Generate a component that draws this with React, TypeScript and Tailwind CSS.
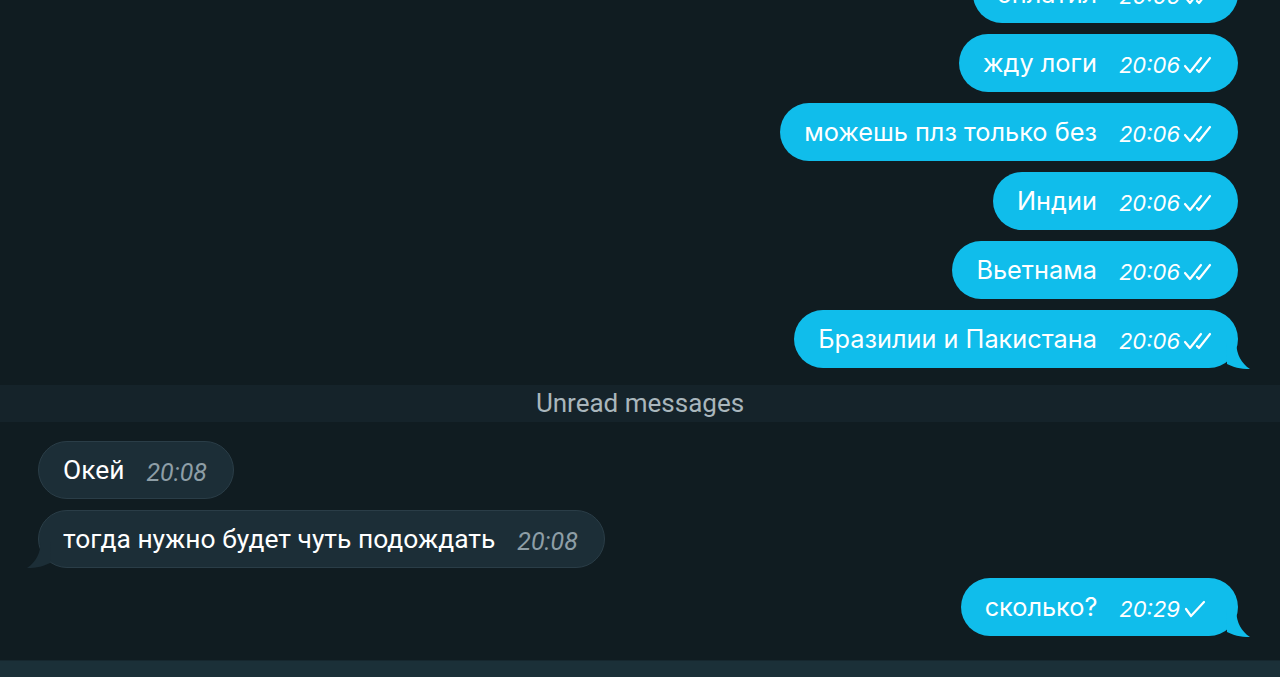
import React from "react";

type Msg = { text: string; time: string; read?: boolean; tail?: boolean };

const outgoingTop: Msg[] = [
  { text: "оплатил", time: "20:05", read: true },
  { text: "жду логи", time: "20:06", read: true },
  { text: "можешь плз только без", time: "20:06", read: true },
  { text: "Индии", time: "20:06", read: true },
  { text: "Вьетнама", time: "20:06", read: true },
  { text: "Бразилии и Пакистана", time: "20:06", read: true, tail: true },
];

const Checks = ({ double }: { double: boolean }) => (
  <svg width="32" height="22" viewBox="0 0 32 22" fill="none" stroke="white" strokeWidth="2.2" strokeLinecap="round" strokeLinejoin="round" className="ml-[2px]">
    {double ? (
      <>
        <path d="M3 12 L8 18 L19 4" />
        <path d="M15 16 L17 18 L28 4" />
      </>
    ) : (
      <path d="M4 11 L9 18 L22 4" />
    )}
  </svg>
);

const OutTail = () => (
  <svg width="24" height="26" viewBox="0 0 24 26" className="absolute right-[-12px] bottom-[-1px]">
    <path d="M0 0 L10 0 C 11 12, 15 20, 24 26 C 14 26, 7 24, 1 21 Z" fill="#10bdeb" />
  </svg>
);

const InTail = () => (
  <svg width="24" height="26" viewBox="0 0 24 26" className="absolute left-[-12px] bottom-[-1px]">
    <path d="M24 0 L14 0 C 13 12, 9 20, 0 26 C 10 26, 17 24, 23 21 Z" fill="#1c2e37" />
  </svg>
);

const Outgoing = ({ m }: { m: Msg }) => (
  <div className="flex shrink-0 justify-end pr-[42px]">
    <div className="relative h-[58px] shrink-0 rounded-[29px] bg-[#10bdeb] pl-[24px] pr-[24px] flex items-center text-white">
      {m.tail && <OutTail />}
      <span className="relative text-[25.3px] leading-none font-['Inter',sans-serif] whitespace-nowrap">{m.text}</span>
      <span className="relative ml-[22px] text-[22px] italic leading-none font-['Inter',sans-serif] mt-[3px]">{m.time}</span>
      <span className="relative mt-[3px]"><Checks double={!!m.read} /></span>
    </div>
  </div>
);

const Incoming = ({ m }: { m: Msg }) => (
  <div className="flex shrink-0 justify-start pl-[38px]">
    <div className="relative h-[58px] shrink-0 rounded-[29px] bg-[#1c2e37] border border-[#2a3d47] pl-[24px] pr-[26px] flex items-center">
      {m.tail && <InTail />}
      <span className="relative text-[26.4px] leading-none text-white font-['Roboto',sans-serif] whitespace-nowrap">{m.text}</span>
      <span className="relative ml-[22px] text-[25px] italic leading-none text-[#8e9ea6] font-['Roboto',sans-serif] mt-[4px]">{m.time}</span>
    </div>
  </div>
);

export default function App() {
  return (
    <div className="w-[1280px] h-[677px] bg-[#101c21] overflow-hidden flex flex-col">
      <div className="flex-1 min-h-0 flex flex-col justify-end overflow-hidden pb-[24px]">
        <div className="flex shrink-0 flex-col gap-[11px]">
          {outgoingTop.map((m, i) => (
            <Outgoing key={i} m={m} />
          ))}
        </div>
        <div className="mt-[17px] h-[37px] shrink-0 bg-[#15232a] flex items-center justify-center text-[26px] text-[#a9b6bc] font-['Roboto',sans-serif]">
          Unread messages
        </div>
        <div className="mt-[19px] flex shrink-0 flex-col gap-[11px]">
          <Incoming m={{ text: "Окей", time: "20:08" }} />
          <Incoming m={{ text: "тогда нужно будет чуть подождать", time: "20:08", tail: true }} />
        </div>
        <div className="mt-[10px] shrink-0">
          <Outgoing m={{ text: "сколько?", time: "20:29", read: false, tail: true }} />
        </div>
      </div>
      <div className="h-[17px] shrink-0 bg-[#1b3038] border-t border-[#16272e]" />
    </div>
  );
}
